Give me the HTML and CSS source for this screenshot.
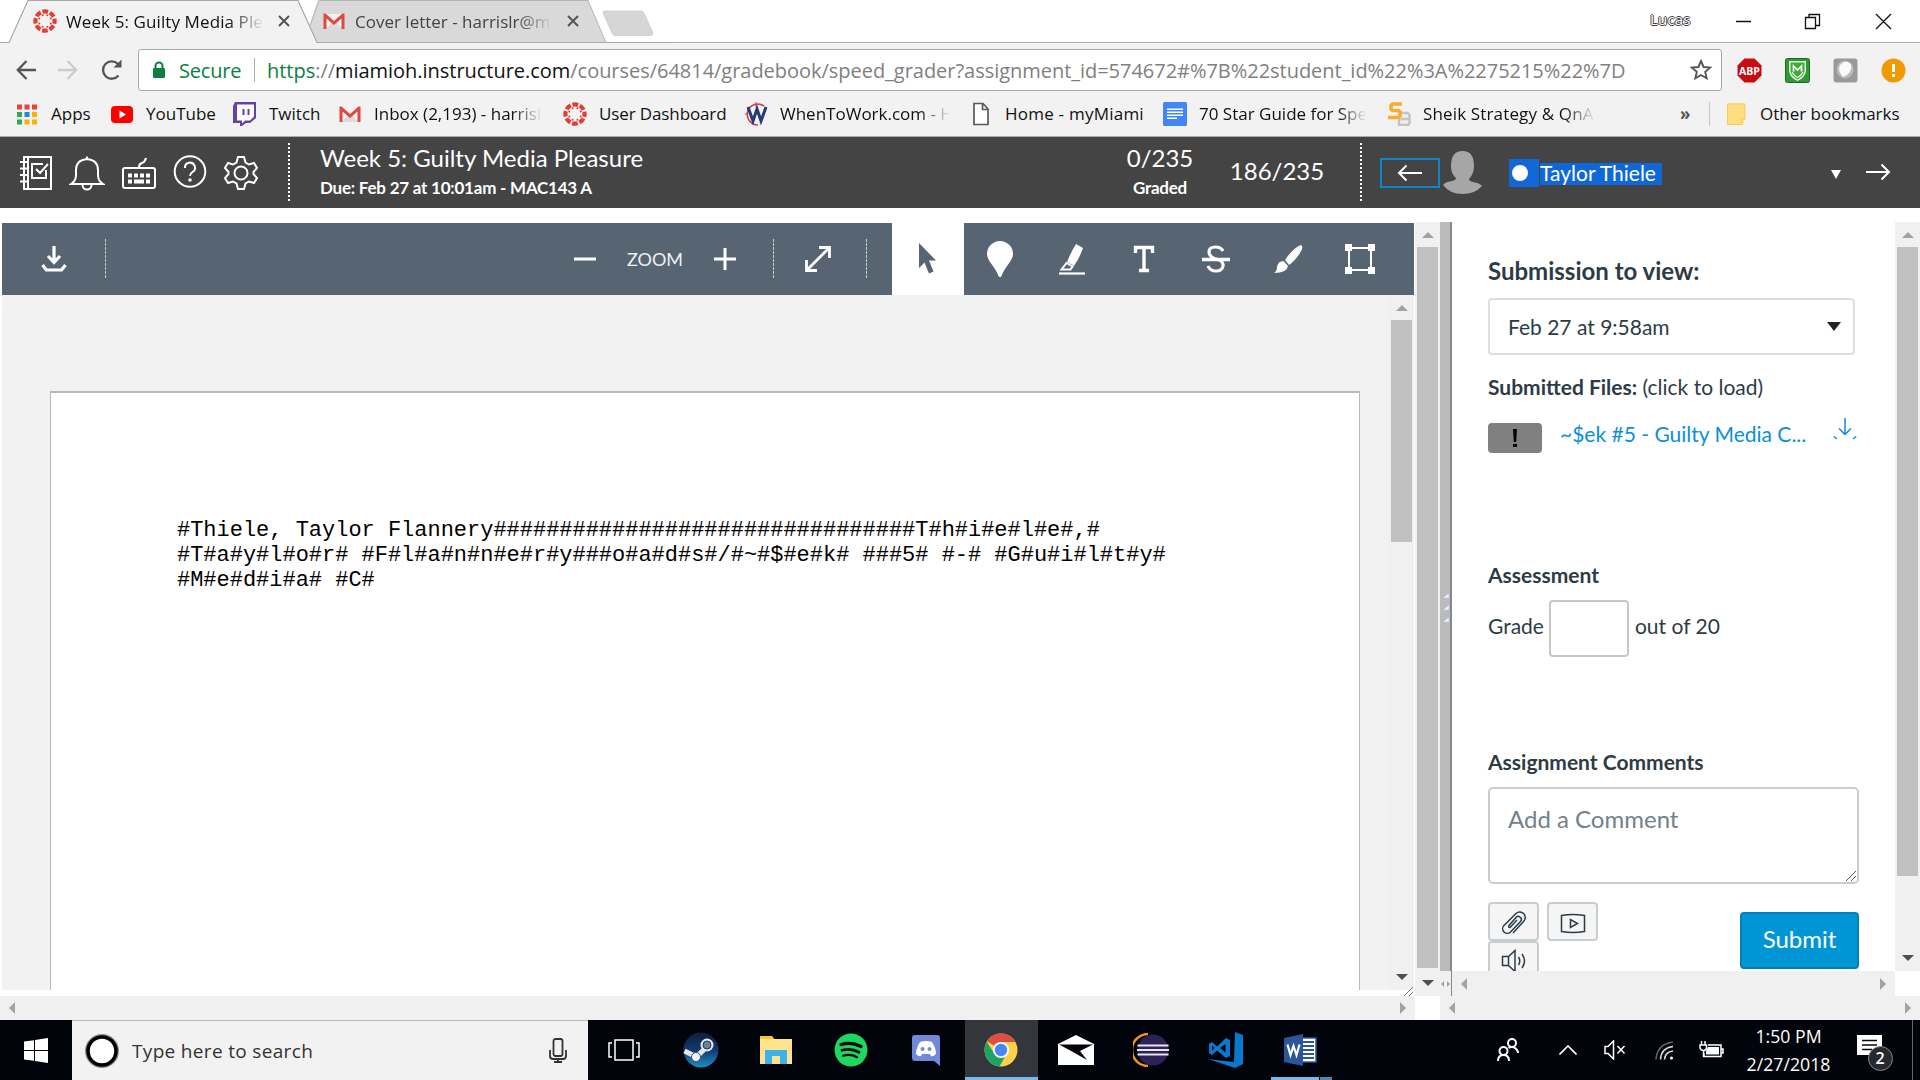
FILE: index.html
```html
<!DOCTYPE html>
<html lang="en">
<head>
<meta charset="utf-8">
<title>Week 5: Guilty Media Pleasure</title>
<link rel="stylesheet" href="styles.css">
</head>
<body>
<svg class="defs" width="0" height="0">
  <symbol id="canvas-logo" viewBox="0 0 24 24">
    <circle cx="12" cy="12" r="9.6" fill="none" stroke="#e43c30" stroke-width="4.2" stroke-dasharray="5.6 1.94" stroke-dashoffset="2.8"/>
    <g fill="#e43c30"><circle cx="17.7" cy="9.6" r="1"/><circle cx="17.7" cy="14.4" r="1"/><circle cx="14.4" cy="17.7" r="1"/><circle cx="9.6" cy="17.7" r="1"/><circle cx="6.3" cy="14.4" r="1"/><circle cx="6.3" cy="9.6" r="1"/><circle cx="9.6" cy="6.3" r="1"/><circle cx="14.4" cy="6.3" r="1"/></g>
  </symbol>
  <symbol id="gmail" viewBox="0 0 24 24">
    <path d="M3 5h18v15H3z" fill="#f2f2f2"/><path d="M3 20L12 12l9 8z" fill="#dcdcdc"/>
    <path d="M1.5 20V4.5h2L12 12l8.500-7.500h2V20h-3V9.500L12 16 4.500 9.500V20z" fill="#dd4b3e"/>
  </symbol>
  <symbol id="page-file" viewBox="0 0 24 24"><path d="M5 1.500h9l5 5.500v15.500H5zM13.500 1.500V7.500H19" fill="#fff" stroke="#5a5a5a" stroke-width="1.700"/></symbol>
</svg>

<header class="tabs">
  <svg class="tab-shapes" width="670" height="43" viewBox="0 0 670 43">
    <path d="M0 42.500H9L28 0.500H298L317 42.500H670V44H0z" fill="#f2f2f2"/>
    <path d="M310 26L298 0.500H588L606 42.500H317z" fill="#d9d9d9"/>
    <path d="M310 26L319 0.500H588L606 42.500" fill="none" stroke="#b5b5b5"/>
    <path d="M298 0L309 26L318 0z" fill="#fff"/>
    <path d="M0 42.500H9L28 0.500H298L317 42.500H670" fill="none" stroke="#a9a9a9" stroke-width="1.200"/>
    <path d="M604 11H641Q643 11 644 13L653 33Q653 35.500 651 35.500H615Q613 35.500 612 33L603 13Q603 11 604 11z" fill="#d6d6d6" stroke="#c4c4c4" stroke-width=".6"/>
  </svg>
  <div class="tab tab-a"><svg width="24" height="24"><use href="#canvas-logo"/></svg><span class="label"><i>Week 5: Guilty Media Ple</i></span><svg width="12" height="12" viewBox="0 0 12 12"><path d="M1 1l10 10M11 1L1 11" stroke="#555" stroke-width="2"/></svg></div>
  <div class="tab tab-b"><svg width="24" height="24"><use href="#gmail"/></svg><span class="label"><i>Cover letter - harrislr@m</i></span><svg width="12" height="12" viewBox="0 0 12 12"><path d="M1 1l10 10M11 1L1 11" stroke="#555" stroke-width="2"/></svg></div>
  <span class="user"><i>Lucas</i></span>
  <svg class="winbtns" width="160" height="24" viewBox="0 0 160 24" fill="none" stroke="#111" stroke-width="1.300"><path d="M0 12.500h15M69.500 8.500h10v11h-10zM73 8V5.500h10.500v11H80M140 5l15 15M155 5l-15 15"/></svg>
</header>

<div class="nav">
  <svg class="navicons" width="110" height="26" viewBox="0 0 110 26" fill="none" stroke="#555" stroke-width="2.300">
    <path d="M20 13H2M10.500 4L1.800 13l8.700 9"/><path d="M42 13h18M51.500 4l8.700 9-8.700 9" stroke="#ccc"/><path d="M102.500 18.500A8.700 8.700 0 1 1 102 7"/><path d="M105.500 2.500v8h-8z" fill="#555" stroke="none"/>
  </svg>
  <div class="omnibox">
    <svg class="lock" width="14" height="18" viewBox="0 0 14 18"><path d="M3.500 8V5a3.500 3.500 0 0 1 7 0v3" fill="none" stroke="#0b8043" stroke-width="2"/><rect x="1" y="7" width="12" height="10" rx="1" fill="#0b8043"/></svg>
    <span class="secure"><i>Secure</i></span><span class="bar"></span>
    <span class="url"><i><b>https</b>://<em>miamioh.instructure.com</em>/courses/64814/gradebook/speed_grader?assignment_id=574672#%7B%22student_id%22%3A%2275215%22%7D</i></span>
    <svg class="star" width="22" height="22" viewBox="0 0 22 22"><path d="M11 2l2.600 6 6.600.6-5 4.300 1.500 6.500L11 16l-5.700 3.400 1.500-6.500-5-4.300 6.600-.6z" fill="none" stroke="#555" stroke-width="1.900"/></svg>
  </div>
  <svg class="ext" width="25" height="25" viewBox="0 0 25 25"><path d="M7.500.5h10l7 7v10l-7 7h-10l-7-7v-10z" fill="#c70d12"/><text x="12.500" y="16.600" text-anchor="middle" class="abp">ABP</text></svg>
  <svg class="ext" width="25" height="25" viewBox="0 0 25 25"><rect x=".5" y=".5" width="24" height="24" rx="2" fill="#2f9a32" stroke="#1c6d24"/><path d="M4 3h17v10q-1 7-8.500 10Q5 20 4 13z" fill="#e8f3e4"/><path d="M5.500 4.500h14v8.500q-1 5.500-7 8.500Q6.500 18.500 5.500 13z" fill="#3faa35"/><path d="M8.500 13.500V8l4 4 4-4v5.500" fill="none" stroke="#fff" stroke-width="1.700"/><path d="M7 14q2 4 5.500 5.500Q16 18 18 14" fill="none" stroke="#fff" stroke-width="1.200"/></svg>
  <svg class="ext" width="25" height="25" viewBox="0 0 25 25"><rect x=".5" y=".5" width="24" height="24" rx="3" fill="#999"/><ellipse cx="12" cy="11.500" rx="8.500" ry="9" fill="#bcbcbc"/><path d="M10 19Q20 15 18 6Q12 1 7 7Q4 12 10 19z" fill="#fafafa"/></svg>
  <svg class="ext" width="25" height="25" viewBox="0 0 25 25"><circle cx="12.500" cy="12.500" r="12" fill="#f29900"/><path d="M11 6h3v8h-3zM11 16h3v3h-3z" fill="#fff"/></svg>
</div>

<nav class="bookmarks">
  <div><svg width="24" height="24" viewBox="0 0 24 24"><path d="M2 2.500h5v5H2zM9.500 2.500h5v5h-5zM17 2.500h5v5h-5z" fill="#ea4335"/><path d="M2 10h5v5H2zM2 17.500h5v5H2z" fill="#34a853"/><path d="M9.500 10h5v5h-5z" fill="#1e88e5"/><path d="M17 10h5v5h-5zM9.500 17.500h5v5h-5zM17 17.500h5v5h-5z" fill="#fbb200"/></svg><span><i>Apps</i></span></div>
  <div><svg width="24" height="24" viewBox="0 0 24 24"><rect x="1" y="4" width="22" height="17" rx="4" fill="#f00"/><path d="M9.500 8.500v8l6.500-4z" fill="#fff"/></svg><span><i>YouTube</i></span></div>
  <div><svg width="24" height="24" viewBox="0 0 24 24"><path d="M2 0h21v16l-6 5h-4l-4 3H7v-3H0V4z" fill="#6441a5"/><path d="M4 2.500h17v12l-4 4h-5l-3 3v-3H4z" fill="#fff"/><path d="M9.500 7h2v6h-2zM14.500 7h2v6h-2z" fill="#6441a5"/></svg><span><i>Twitch</i></span></div>
  <div><svg width="24" height="24"><use href="#gmail"/></svg><span class="fade w-inbox"><i>Inbox (2,193) - harrisl</i></span></div>
  <div><svg width="24" height="24"><use href="#canvas-logo"/></svg><span class="dash"><i>User Dashboard</i></span></div>
  <div><svg width="24" height="24" viewBox="0 0 24 24"><path d="M20 4A10.500 10.500 0 1 0 14 23" fill="none" stroke="#d9363e" stroke-width="1.600"/><path d="M12 0v5M1 12h3" stroke="#d9363e"/><path d="M4 5l5 14L13 7l4 12 5-14" fill="none" stroke="#233a7a" stroke-width="3"/></svg><span class="fade w-when"><i>WhenToWork.com - H</i></span></div>
  <div><svg width="24" height="24"><use href="#page-file"/></svg><span class="home"><i>Home - myMiami</i></span></div>
  <div><svg width="24" height="24" viewBox="0 0 24 24"><rect width="24" height="24" rx="1.500" fill="#4285f4"/><path d="M4 7.300h16M4 10.300h16M4 13.300h16M4 16.300h10" stroke="#fff" stroke-width="1.600"/></svg><span class="fade w-star"><i>70 Star Guide for Spee</i></span></div>
  <div><svg width="24" height="24" viewBox="0 0 24 24"><path d="M14 11h7l1.500 2v8L21 23h-9v-6M13.500 17h8" fill="#eee" stroke="#c4c4c4" stroke-width="2.500"/><path d="M15 2H5.500L4 3.500V7l1.500 1.500h6L13 10v4l-1.500 1.500H1" fill="none" stroke="#f9ab33" stroke-width="3.600"/></svg><span class="fade w-sheik"><i>Sheik Strategy &amp; QnA</i></span></div>
  <div class="more">»</div>
  <div class="other"><svg width="24" height="24" viewBox="0 0 24 24"><path d="M3 1.500h18v16l-2 5H3z" fill="#fde293"/><path d="M3.500 2H21v15h-3v5.500H3.500z" fill="#fddf80" stroke="#f3cd5a"/></svg><span><i>Other bookmarks</i></span></div>
</nav>

<div class="grader-head">
  <div class="tools">
    <svg width="36" height="36" viewBox="0 0 36 36"><path d="M6 2h27v32H6zM10 2v32M2 7h7M2 13.500h7M2 20h7M2 26.500h7M25 9H14v14h14v-8M18 14l4 4 8-9"/></svg>
    <svg width="36" height="36" viewBox="0 0 36 36"><path d="M2 29h32q-5-3-5-9v-5Q29 5 18 4 7 5 7 15v5q0 6-5 9zM13.500 30a4.500 4.500 0 0 0 9 0M18 1.500v2.500"/></svg>
    <svg width="36" height="36" viewBox="0 0 36 36"><rect x="2" y="13" width="32" height="20" rx="2"/><path d="M18 12q0-3 3-4 3-1 4-5"/><path d="M7 20.500h4M13 20.500h4M19 20.500h4M25 20.500h4M7 26.500h4M13 26.500h10M25 26.500h4" stroke-width="4"/></svg>
    <svg width="36" height="36" viewBox="0 0 36 36"><circle cx="18" cy="16.500" r="15.300"/><path d="M13 13a5 5 0 1 1 7.500 4Q18 18.500 18 21"/><circle cx="18" cy="25" r=".8"/></svg>
    <svg width="36" height="36" viewBox="0 0 36 36"><path d="M15 2h6l1.500 5.500 3.500 2 5-1.500 3 5-3.500 4v2l3.500 4-3 5-5-1.500-3.500 2L21 34h-6l-1.500-5.500-3.500-2L5 28l-3-5 3.500-4v-2L2 13l3-5 5 1.500 3.500-2z"/><circle cx="18" cy="18" r="6.500"/></svg>
  </div>
  <div class="dots"></div>
  <div class="title"><h1><i>Week 5: Guilty Media Pleasure</i></h1><p><i>Due: Feb 27 at 10:01am - MAC143 A</i></p></div>
  <div class="graded"><strong><i>0/235</i></strong><p><i>Graded</i></p></div>
  <div class="position"><i>186/235</i></div>
  <div class="dots second"></div>
  <button class="prev"><svg width="26" height="18" viewBox="0 0 26 18"><path d="M25 9H1.500M9.500 1.500L2 9l7.500 7.500"/></svg></button>
  <svg class="avatar" width="39" height="43" viewBox="0 0 39 43"><path d="M19.500 0Q31 0 31 15q0 8-5 13 0 2 4 3 7 1 9 4-7 8-19.500 8T0 34q2-3 9-4 4-1 4-3-5-4-5-12Q8 0 19.500 0z" fill="#a6a6a6"/></svg>
  <div class="sel-dot"></div>
  <div class="sel-name"><i>Taylor Thiele</i></div>
  <svg class="caret" width="12" height="9" viewBox="0 0 12 9"><path d="M1 0h10L6 9z" fill="#fff"/></svg>
  <svg class="next" width="26" height="18" viewBox="0 0 26 18"><path d="M1 9h23.500M16.500 1.500L24 9l-7.500 7.500"/></svg>
</div>

<main class="work">
  <section class="viewer">
    <div class="doc-col">
      <div class="doc-bar">
        <div class="cell c-dl"><svg width="28" height="28" viewBox="0 0 28 28" fill="none" stroke="#fff" stroke-width="3.200"><path d="M14 1v15M8 11l6 6.500 6-6.500" /><path d="M2.500 20l4 5h15l4-5"/></svg></div>
        <div class="sep"></div>
        <div class="cell c-minus"><svg width="22" height="22" viewBox="0 0 22 22"><path d="M0 11h22" stroke="#fff" stroke-width="3"/></svg></div>
        <div class="cell c-zoom"><i>ZOOM</i></div>
        <div class="cell c-plus"><svg width="22" height="22" viewBox="0 0 22 22"><path d="M0 11h22M11 0v22" stroke="#fff" stroke-width="3"/></svg></div>
        <div class="sep s2"></div>
        <div class="cell c-exp"><svg width="28" height="28" viewBox="0 0 28 28" fill="none" stroke="#fff" stroke-width="2.800"><path d="M3 25L25 3M15 2.500h10.500V13M2.500 15v10.500H13"/></svg></div>
        <div class="sep s3"></div>
        <div class="cell tool active"><svg width="20" height="32" viewBox="0 0 20 32"><path d="M1 0l17 17.500h-7l4.500 11-4.500 2-4.500-11L1 25z" fill="#566571"/></svg></div>
        <div class="cell tool"><svg width="28" height="38" viewBox="0 0 28 38"><path d="M14 1a13 13 0 0 1 13 13c0 7-8 12-12 23h-2C9 26 1 21 1 14A13 13 0 0 1 14 1z" fill="#fff"/></svg></div>
        <div class="cell tool"><svg width="30" height="32" viewBox="0 0 30 32"><path d="M19 1l7 4q-3 9-9 18l-7-4Q14 9 19 1z" fill="#fff"/><path d="M9.500 20l6 3.500-2 3H4.500z" fill="none" stroke="#fff" stroke-width="2"/><path d="M2 30.500h26" stroke="#fff" stroke-width="2.200"/></svg></div>
        <div class="cell tool"><svg width="24" height="28" viewBox="0 0 24 28"><path d="M3.500 8V2.500h17V8M12 2v23M7 25.500h10" fill="none" stroke="#fff" stroke-width="3.400"/></svg></div>
        <div class="cell tool"><svg width="28" height="28" viewBox="0 0 28 28" fill="none" stroke="#fff" stroke-width="3.200"><path d="M21 6Q19 2 13.500 2 7 2 7 7q0 5 8 7.500M14 14q8 2 7 7-1 5-7 5-6 0-8-5"/><path d="M0 14.500h28" stroke-width="3.500"/></svg></div>
        <div class="cell tool"><svg width="30" height="30" viewBox="0 0 30 30" fill="#fff"><path d="M28 1q3 2-1 8-5 8-11 12l-4-5Q20 4 28 1z"/><path d="M10.500 17l4.500 5q-1 7-14 7 3-2 3-6 1-6 6.500-6z"/></svg></div>
        <div class="cell tool"><svg width="32" height="32" viewBox="0 0 32 32"><path d="M5 5h22v22H5z" fill="none" stroke="#fff" stroke-width="2"/><path d="M1 1h7v7H1zM24 1h7v7h-7zM1 24h7v7H1zM24 24h7v7h-7z" fill="#fff"/></svg></div>
      </div>
      <div class="doc-body">
        <div class="paper"><pre>#Thiele, Taylor Flannery################################T#h#i#e#l#e#,#
#T#a#y#l#o#r# #F#l#a#n#n#e#r#y###o#a#d#s#/#~#$#e#k# ###5# #-# #G#u#i#l#t#y#
#M#e#d#i#a# #C#</pre></div>
        <div class="vbar in-bar"><u class="up"></u><div class="thumb"></div><u class="down"></u></div>
      </div>
      <svg class="grip" width="9" height="9" viewBox="0 0 9 9"><path d="M0 9L9 0M5 9l4-4" stroke="#777"/></svg>
    </div>
    <div class="vbar out-bar"><u class="up"></u><div class="thumb"></div><u class="down"></u></div>
    <div class="hbar hb1"><u class="left"></u><u class="right"></u></div>
    <div></div>
  </section>
  <section class="side">
    <div class="splitter"><svg width="8" height="34" viewBox="0 0 8 34"><path d="M1 6l6-5v5zM1 18l6-5v5zM1 30l6-5v5z" fill="#eef2fa" stroke="#b4c4e0" stroke-width=".6"/></svg></div>
    <div class="panel">
      <h2><i>Submission to view:</i></h2>
      <div class="select"><i>Feb 27 at 9:58am</i><svg width="14" height="9" viewBox="0 0 14 9"><path d="M0 0h14L7 9z" fill="#222"/></svg></div>
      <p class="files"><b><i>Submitted Files:</i></b> <i>(click to load)</i></p>
      <div class="file-row"><span class="badge"><svg width="8" height="20" viewBox="0 0 8 20"><path d="M2 1h4l-.8 13H2.800zM2 16h4v3H2z"/></svg></span><span class="link"><i>~$ek #5 - Guilty Media C...</i></span><svg class="dl" width="24" height="24" viewBox="0 0 24 24" fill="none" stroke="#0a8fdc" stroke-width="1.500"><path d="M12 1v16M6 11.500l6 6 6-6M.8 19.500l3 2.500M23.200 19.500l-3 2.500"/></svg></div>
      <h3 class="assess"><i>Assessment</i></h3>
      <div class="grade"><i>Grade</i><span class="box"></span><i>out of 20</i></div>
      <h3 class="comm"><i>Assignment Comments</i></h3>
      <div class="textarea"><i>Add a Comment</i><svg width="10" height="10" viewBox="0 0 10 10"><path d="M0 10L10 0M5 10l5-5" stroke="#555"/></svg></div>
      <div class="actions">
        <div class="media">
          <span><svg width="26" height="26" viewBox="0 0 26 26"><path d="M12 24L22.500 12.500a5.200 5.200 0 0 0-7.500-8L3 16.500a4.500 4.500 0 0 0 6.500 6.500l10-10.500a3 3 0 0 0-4.500-4L8 16.500q-1 2 1 2l7-7.500"/></svg></span>
          <span><svg width="26" height="26" viewBox="0 0 26 26"><path d="M1.500 6.500q11.500-2 23 0v16q-11.500 2-23 0zM10.500 10.500v8l7-4z"/></svg></span>
          <span><svg width="26" height="26" viewBox="0 0 26 26"><path d="M1.500 8.500h6l6.500-6v21l-6.500-6h-6zM7.500 8.500v9M17.500 9q2.500 4 0 8M21 6q5 7 0 14"/></svg></span>
        </div>
        <button class="submit"><i>Submit</i></button>
      </div>
    </div>
    <div class="vbar side-bar"><u class="up"></u><div class="thumb"></div><u class="down"></u></div>
    <div class="hbar mini"><u class="left"></u><u class="right"></u></div>
    <div class="hbar hb2"><u class="left"></u><u class="right"></u></div>
    <div></div>
    <div class="hbar hb3"><u class="left"></u><u class="right"></u></div>
  </section>
</main>

<footer class="taskbar">
  <div class="start"><svg width="24" height="25" viewBox="0 0 24 25" fill="#fff"><path d="M0 3.500l10-1.300V12H0zM11 2l13-2v12H11zM0 13h10v9.800L0 21.500zM11 13h13v12l-13-2z"/></svg></div>
  <div class="search"><svg width="34" height="34" viewBox="0 0 34 34"><circle cx="17" cy="17" r="14.500" fill="none" stroke="#8a8a8a" stroke-width="5"/><circle cx="17" cy="17" r="14" fill="#fff" stroke="#000" stroke-width="3.500"/></svg><span><i>Type here to search</i></span><svg class="mic" width="18" height="25" viewBox="0 0 18 25" fill="none" stroke="#333" stroke-width="1.800"><rect x="4.500" y="1" width="9" height="17" rx="2"/><path d="M1 12v6q0 3 3 3h10q3 0 3-3v-6M9 21v3M5 24h8"/></svg></div>
  <div class="app view"><svg width="32" height="22" viewBox="0 0 32 22" fill="none" stroke="#fff" stroke-width="1.500"><path d="M7 1h18v20H7zM4 4H1v14h3M28 4h3v14h-3"/></svg></div>
  <div class="app"><svg width="36" height="36" viewBox="0 0 36 36"><defs><linearGradient id="st" x2="0" y2="1"><stop stop-color="#111d3a"/><stop offset=".5" stop-color="#123a70"/><stop offset="1" stop-color="#1b8fc5"/></linearGradient></defs><circle cx="18" cy="18" r="17.500" fill="url(#st)"/><path d="M1.500 19l12 6 9-9" stroke="#e8e8e8" stroke-width="5" fill="none"/><circle cx="24" cy="13" r="6.500" fill="#e8e8e8"/><circle cx="24" cy="13" r="4" fill="#6c8098" stroke="#123a70"/><circle cx="13" cy="25" r="4.500" fill="#f4f4f4" stroke="#34507a"/></svg></div>
  <div class="app"><svg width="34" height="30" viewBox="0 0 34 30"><path d="M1 1h12l2 3h18v25H1z" fill="#ffe28c"/><path d="M1 1h12l2 3H1z" fill="#f7c531"/><path d="M6 29V15h22v14h-7v-8h-8v8z" fill="#3db2e8"/></svg></div>
  <div class="app"><svg width="34" height="34" viewBox="0 0 34 34"><circle cx="17" cy="17" r="16.500" fill="#1ed760"/><g fill="none" stroke="#0b0b0b" stroke-linecap="round"><path d="M7 11.500q11-3 20 2" stroke-width="3.200"/><path d="M8 17.300q9-2.500 17 2" stroke-width="2.700"/><path d="M9 22.700q8-2 14 1.500" stroke-width="2.200"/></g></svg></div>
  <div class="app"><svg width="30" height="32" viewBox="0 0 30 32"><path d="M4 1h22q3 0 3 3v28l-6-5H4q-3 0-3-3V4q0-3 3-3z" fill="#7289da"/><path d="M9 8q6-2 12 0 4 6 4 12-3 3-5 2l-1-2h-8l-1 2q-2 1-5-2 0-6 4-12z" fill="#fff"/><circle cx="11.500" cy="15" r="2" fill="#7289da"/><circle cx="18.500" cy="15" r="2" fill="#7289da"/></svg></div>
  <div class="app current"><svg width="34" height="34" viewBox="0 0 34 34"><circle cx="17" cy="17" r="16.500" fill="#fcd04a"/><path d="M17 17L3 8.200A16.500 16.500 0 0 1 31.500 9H17z" fill="#dd4f43"/><path d="M2.700 8.800A16.500 16.500 0 0 0 15.500 33.400L22 22 10 20z" fill="#1da462"/><circle cx="17" cy="17" r="8" fill="#fff"/><circle cx="17" cy="17" r="6.200" fill="#4587f3"/></svg></div>
  <div class="app"><svg width="36" height="30" viewBox="0 0 36 30"><path d="M0 9L18 0l18 9v21H0z" fill="#fff"/><path d="M1 9.500h34L22 16l7 9-14-8z" fill="#02040a"/></svg></div>
  <div class="app"><svg width="36" height="34" viewBox="0 0 36 34"><path d="M15 1A16 16 0 0 0 15 33" fill="none" stroke="#f7941e" stroke-width="2.500"/><circle cx="20" cy="17" r="15.500" fill="#2c2255"/><path d="M4.500 12.500h31M4 17h32M4.500 21.500h31" stroke="#e8e4f4" stroke-width="2"/></svg></div>
  <div class="app"><svg width="36" height="36" viewBox="0 0 36 36" fill="#0a79cc"><path d="M27 0l8 3v29l-8 4L0 27l26 3z"/><path d="M18 6l4 2v16l-4 2L9 18.500 4 23l-3-2v-9l3-2 5 4.500zM17.500 12L12 16l5.500 4.500zM4 13.500v5L6.500 16z" fill-rule="evenodd"/></svg></div>
  <div class="app word"><svg width="34" height="32" viewBox="0 0 34 32"><path d="M17 4h15v24H17z" fill="#fff" stroke="#2b579a" stroke-width="1.500"/><path d="M19 8h11M19 12h11M19 16h11M19 20h11M19 24h11" stroke="#2b579a" stroke-width="2"/><path d="M0 4l19-4v32L0 28z" fill="#2b579a"/><path d="M3.500 10.500L6.500 21 9.500 12l3 9 3-10.500" fill="none" stroke="#fff" stroke-width="2.200"/></svg></div>
  <div class="tray">
    <svg width="22" height="24" viewBox="0 0 22 24" fill="none" stroke="#fff" stroke-width="2"><circle cx="15" cy="5" r="4"/><circle cx="6.500" cy="13" r="4"/><path d="M1 23q0-6 5.500-6T12 23M11.500 10Q15 8 18 10q3 2 3 5"/></svg>
    <svg width="18" height="10" viewBox="0 0 18 10" fill="none" stroke="#fff" stroke-width="1.600"><path d="M.5 9.500L9 1l8.500 8.500"/></svg>
    <svg width="22" height="20" viewBox="0 0 22 20" fill="none" stroke="#fff" stroke-width="1.500"><path d="M1 6.500h3L9.500 1v18L4 13.500H1zM13.500 6l7 7.500M20.500 6l-7 7.500"/></svg>
    <svg width="19" height="19" viewBox="0 0 19 19" fill="none" stroke="#ddd" stroke-width="1.500"><path d="M1 18.500Q2 3 18 1" stroke="#666"/><path d="M5.500 18.500Q6 7 18 5.500M9.500 18.500Q10 11 18 10"/><circle cx="16.500" cy="17" r="1.500" fill="#fff" stroke="none"/></svg>
    <svg width="25" height="18" viewBox="0 0 25 18" fill="none" stroke="#fff" stroke-width="1.500"><path d="M9 4h13v11.500H5V12M22 8h2v4h-2M2.500 0v4M6 0v4M1 4h6.500v3Q7 9.500 4.500 9.500T1 7zM4.500 9.500V16"/><path d="M9 6h11v7.500H7V10z" fill="#fff" stroke="none"/></svg>
    <div class="clock"><i>1:50 PM</i><i>2/27/2018</i></div>
    <div class="notif"><svg width="25" height="26" viewBox="0 0 25 26"><path d="M0 0h25v20h-7v6l-6-6H0z" fill="#fff"/><path d="M5 5.500h15M5 10h15M5 14.500h10" stroke="#05070c" stroke-width="1.500"/></svg><b>2</b></div>
    <div class="peek"></div>
  </div>
</footer>
</body>
</html>
```
FILE: styles.css
```css
* { box-sizing: border-box; margin: 0; padding: 0; }
html, body { width: 1920px; height: 1080px; overflow: hidden; background: #fff; }
body { font-family: Lato, sans-serif; color: #2d3b45; display: flex; flex-direction: column; }
i { font-style: normal; white-space: pre; }
u { text-decoration: none; }
svg { display: block; flex: none; }
button { border: 0; background: none; font: inherit; }
.defs { position: absolute; }

.tabs, .nav, .bookmarks, .taskbar { font-family: "Open Sans", sans-serif; }

/* tab strip */
.tabs { position: relative; height: 43px; flex: none; display: flex; align-items: center; background: #fff; border-bottom: 1px solid #b0b0b0; }
.tab-shapes { position: absolute; left: 0; top: 0; }
.tab { position: relative; display: flex; align-items: center; font-size: 17px; color: #111; }
.tab-a { margin-left: 33px; }
.tab-a i { letter-spacing: .1px; }
.tab-b { margin-left: 32px; color: #444; }
.label { margin: 0 14px 0 9px; width: 198px; overflow: hidden; -webkit-mask-image: linear-gradient(90deg, #000 82%, transparent); mask-image: linear-gradient(90deg, #000 82%, transparent); }
.user { margin: 0 0 4px 1071px; width: 86px; font-size: 15px; color: #fff; letter-spacing: .2px; text-shadow: 1px 0 #444, -1px 0 #444, 0 1px #444, 0 -1px #444; }
.winbtns { margin-bottom: 1px; }

/* address row */
.nav { height: 54px; flex: none; background: #f2f2f2; display: flex; align-items: center; }
.navicons { margin-left: 16px; }
.omnibox { margin-left: 12px; width: 1584px; height: 42px; background: #fff; border: 1px solid #a9a9a9; border-radius: 3px; display: flex; align-items: center; font-size: 20px; }
.lock { margin-left: 13px; }
.secure { margin-left: 13px; width: 75px; color: #0b8043; letter-spacing: -.2px; }
.bar { width: 1px; height: 24px; background: #aaa; }
.url { margin-left: 12px; width: 1423px; color: #808080; letter-spacing: -.03px; }
.url b { font-weight: 400; color: #0b8043; }
.url em { font-style: normal; color: #111; }
.ext { margin-left: 15px; }
.ext + .ext { margin-left: 23px; }
.abp { font: 700 10.5px "Open Sans", sans-serif; fill: #fff; }

/* bookmarks */
.bookmarks { height: 40px; flex: none; background: #f2f2f2; border-bottom: 1px solid #aaa; padding: 0 0 6px 15px; display: grid; grid-template-columns: 95px 123px 105px 225px 181px 225px 194px 224px 283px 39px 1fr; align-items: center; font-size: 17px; color: #111; }
.bookmarks div { display: flex; align-items: center; gap: 12px; white-space: nowrap; }
.fade { overflow: hidden; -webkit-mask-image: linear-gradient(90deg, #000 82%, transparent); mask-image: linear-gradient(90deg, #000 82%, transparent); }
.w-inbox { width: 168px; }
.w-star { width: 178px; -webkit-mask-image: linear-gradient(90deg, #000 78%, transparent 94%); mask-image: linear-gradient(90deg, #000 78%, transparent 94%); }
.w-when { width: 174px; -webkit-mask-image: linear-gradient(90deg, #000 80%, transparent 98%); mask-image: linear-gradient(90deg, #000 80%, transparent 98%); }
.w-sheik { width: 172px; letter-spacing: .15px; }
.dash { letter-spacing: -.12px; }
.home { letter-spacing: .23px; }
.bookmarks .more { padding-left: 10px; font-weight: 700; color: #555; }
.bookmarks .other { height: 24px; border-left: 1px solid #c4c4c4; padding-left: 14px; }

/* grader header */
.grader-head { height: 71px; flex: none; background: #444; color: #fff; display: flex; align-items: center; }
.tools { width: 288px; padding-left: 18px; display: flex; gap: 15.300px; }
.tools svg, .prev svg, .next { fill: none; stroke: #fff; stroke-width: 2; }
.dots { width: 2px; height: 60px; background: repeating-linear-gradient(#fff 0 2px, transparent 2px 4px); }
.title { margin-left: 30px; width: 790px; }
.title h1, .graded strong { font-size: 24px; font-weight: 400; line-height: 30px; display: block; }
.title p, .graded p { font-size: 17px; font-weight: 700; line-height: 30px; letter-spacing: -.23px; }
.graded { width: 100px; text-align: center; }
.position { width: 134px; text-align: center; font-size: 24px; padding-bottom: 4px; }
.second { margin-left: 16px; }
.prev { margin-left: 18px; width: 60px; height: 30px; border: 2px solid #0f84c9; display: grid; place-items: center; }
.avatar { margin-left: 3px; }
.sel-dot { margin-left: 27px; width: 30px; height: 28px; background: #1068d8; display: flex; align-items: center; padding-left: 3px; }
.sel-dot::before { content: ""; width: 16px; height: 16px; border-radius: 50%; background: #fff; }
.sel-name { margin-left: 1px; margin-top: 3px; width: 122px; height: 22px; line-height: 20px; background: #1068d8; font-size: 21px; }
.caret { margin-left: 168px; margin-top: 3px; }
.next { margin: 0 0 2px 23px; }

/* work area */
.work { height: 812px; flex: none; padding-top: 14px; display: flex; }
.viewer { width: 1440px; display: grid; grid-template: 774px 24px / 1415px 25px; }
.doc-col { padding: 1px 1px 0 2px; position: relative; }
.doc-bar { height: 72px; background: #566571; display: flex; align-items: center; color: #fff; }
.cell { display: flex; justify-content: center; align-items: center; height: 100%; }
.sep { width: 1px; height: 40px; flex: none; background: repeating-linear-gradient(#c5ccd1 0 3px, transparent 3px 4px); }
.c-dl { width: 103px; }
.c-minus { width: 36px; margin-left: 461px; }
.c-zoom { width: 104px; font-size: 18px; color: #eef0f2; }
.c-plus { width: 36px; }
.s2 { margin-left: 30px; }
.c-exp { width: 88px; }
.s3 { margin-left: 4px; margin-right: 25px; }
.tool { width: 72px; }
.active { background: #fff; }
.doc-body { height: 695px; background: #f2f2f2; display: flex; overflow: hidden; }
.paper { margin: 96px 29px 0 48px; width: 1310px; background: #fff; border: 1px solid #b4bac1; border-top-width: 2px; border-bottom: 0; padding: 125px 0 0 126px; color: #000; }
.paper pre { font: 21.97px/25px "Liberation Mono", monospace; }
.grip { position: absolute; right: 2px; bottom: 0; }

/* scrollbars */
.vbar { width: 25px; background: #f0f0f0; display: flex; flex-direction: column; align-items: center; }
.vbar .thumb { width: 21px; background: #c0c0c0; }
.vbar u { width: 0; height: 0; border: 6px solid transparent; }
.vbar .up { border-top: 0; border-bottom-color: #a3a3a3; margin: 10px 0 9px; }
.vbar .down { border-bottom: 0; border-top-color: #505050; margin-top: auto; margin-bottom: 10px; }
.in-bar .thumb { height: 222px; }
.out-bar .thumb { height: 721px; }
.side-bar .thumb { height: 629px; }
.hbar { background: #f0f0f0; display: flex; align-items: center; justify-content: space-between; padding: 0 9px; }
.hbar u { width: 0; height: 0; border: 6px solid transparent; }
.hbar .left { border-left: 0; border-right-color: #a3a3a3; }
.hbar .right { border-right: 0; border-left-color: #a3a3a3; }

/* grading panel */
.side { width: 480px; display: grid; grid-template: 749px 25px 24px / 12px 443px 25px; }
.splitter { background: #bbb; border-right: 2px solid #888; display: flex; align-items: center; padding-left: 2px; }
.splitter svg { margin-top: 24px; }
.mini { padding: 0 1px; border-right: 1px solid #888; }
.mini u { border-width: 3px; }
.hb3 { grid-column: 1 / -1; }
.panel { padding: 31px 36px 0; overflow: hidden; font-size: 21px; }
.panel h2 { font-size: 24px; line-height: 36px; font-weight: 700; }
.select { margin-top: 9px; width: 367px; height: 57px; border: 2px solid #d9dfe4; border-radius: 4px; display: flex; align-items: center; justify-content: space-between; padding: 0 12px 0 18px; }
.files { margin-top: 17px; line-height: 30px; }
.file-row { margin-top: 12px; height: 44px; width: 371px; display: flex; align-items: flex-start; }
.badge { margin-top: 9px; width: 54px; height: 30px; background: #808080; border-radius: 4px; display: grid; place-items: center; }
.link { margin: 5px 0 0 18px; width: 273px; line-height: 30px; color: #0a8fdc; }
.dl { margin-top: 3px; }
.panel h3 { font-size: 21px; line-height: 30px; font-weight: 700; }
.assess { margin-top: 102px; }
.grade { margin-top: 10px; height: 57px; display: flex; align-items: center; }
.grade i { padding-bottom: 7px; }
.grade .box { width: 80px; height: 57px; margin: 0 6px 0 5px; border: 2px solid #c7c7c7; border-radius: 4px; }
.comm { margin-top: 90px; }
.textarea { margin-top: 10px; width: 371px; height: 97px; border: 2px solid #c7cdd1; border-radius: 5px; padding: 14px 18px; font-size: 24px; line-height: 32px; color: #73818c; position: relative; }
.textarea svg { position: absolute; right: 1px; bottom: 1px; }
.actions { margin-top: 18px; width: 371px; display: flex; justify-content: space-between; align-items: flex-start; }
.media { width: 120px; display: flex; flex-wrap: wrap; column-gap: 8px; row-gap: 0; }
.media span { width: 51px; height: 39px; background: #f5f5f5; border: 2px solid #c7cdd1; border-radius: 4px; display: grid; place-items: center; }
.media svg { fill: none; stroke: #2d3b45; stroke-width: 1.5; }
.submit { margin-top: 10px; width: 119px; height: 57px; padding-bottom: 4px; background: #0096d6; border: 2px solid #0081bd; border-radius: 4px; color: #fff; font-size: 24px; }
.grade, .comm, .textarea { position: relative; }

/* taskbar */
.taskbar { height: 60px; flex: none; background: #01040a; display: flex; }
.start { width: 72px; display: grid; place-items: center; }
.search { width: 516px; background: #f2f2f2; border-top: 1px solid #bbb; display: flex; align-items: center; padding-left: 13px; font-size: 19px; color: #333; letter-spacing: .33px; }
.search span { margin-left: 13px; width: 417px; }
.app { width: 75px; display: grid; place-items: center; }
.app.view { width: 75.500px; padding-right: 4px; }
.current { background: #33363b; border-bottom: 3px solid #76b9ed; padding-top: 3px; width: 73px; margin: 0 1px; }
.word { padding-top: 3px; width: 61px; margin-left: 7px; border-bottom: 3px solid; border-image: linear-gradient(90deg, #76b9ed 78%, #000 78% 80%, #5286b0 80%) 1; }
.tray { flex: 1; display: flex; align-items: center; }
.tray > svg:first-child { margin-left: 165px; }
.tray > svg + svg { margin-left: 40px; }
.tray > svg:nth-child(3) { margin-left: 27px; }
.tray > svg:nth-child(4) { margin-left: 29px; }
.tray > svg:nth-child(5) { margin-left: 25px; }
.clock { margin-left: 15px; width: 100px; display: flex; flex-direction: column; align-items: center; color: #fff; font-size: 17.7px; line-height: 28px; }
.notif { margin-left: 18px; position: relative; margin-bottom: 4px; }
.notif b { position: absolute; left: 11px; top: 11px; width: 25px; height: 25px; border: 1px solid #888; border-radius: 50%; background: #26292e; color: #fff; font: 600 16px/23px "Open Sans", sans-serif; text-align: center; }
.peek { margin-left: auto; margin-right: 7px; width: 1px; height: 60px; background: #666; }
```
